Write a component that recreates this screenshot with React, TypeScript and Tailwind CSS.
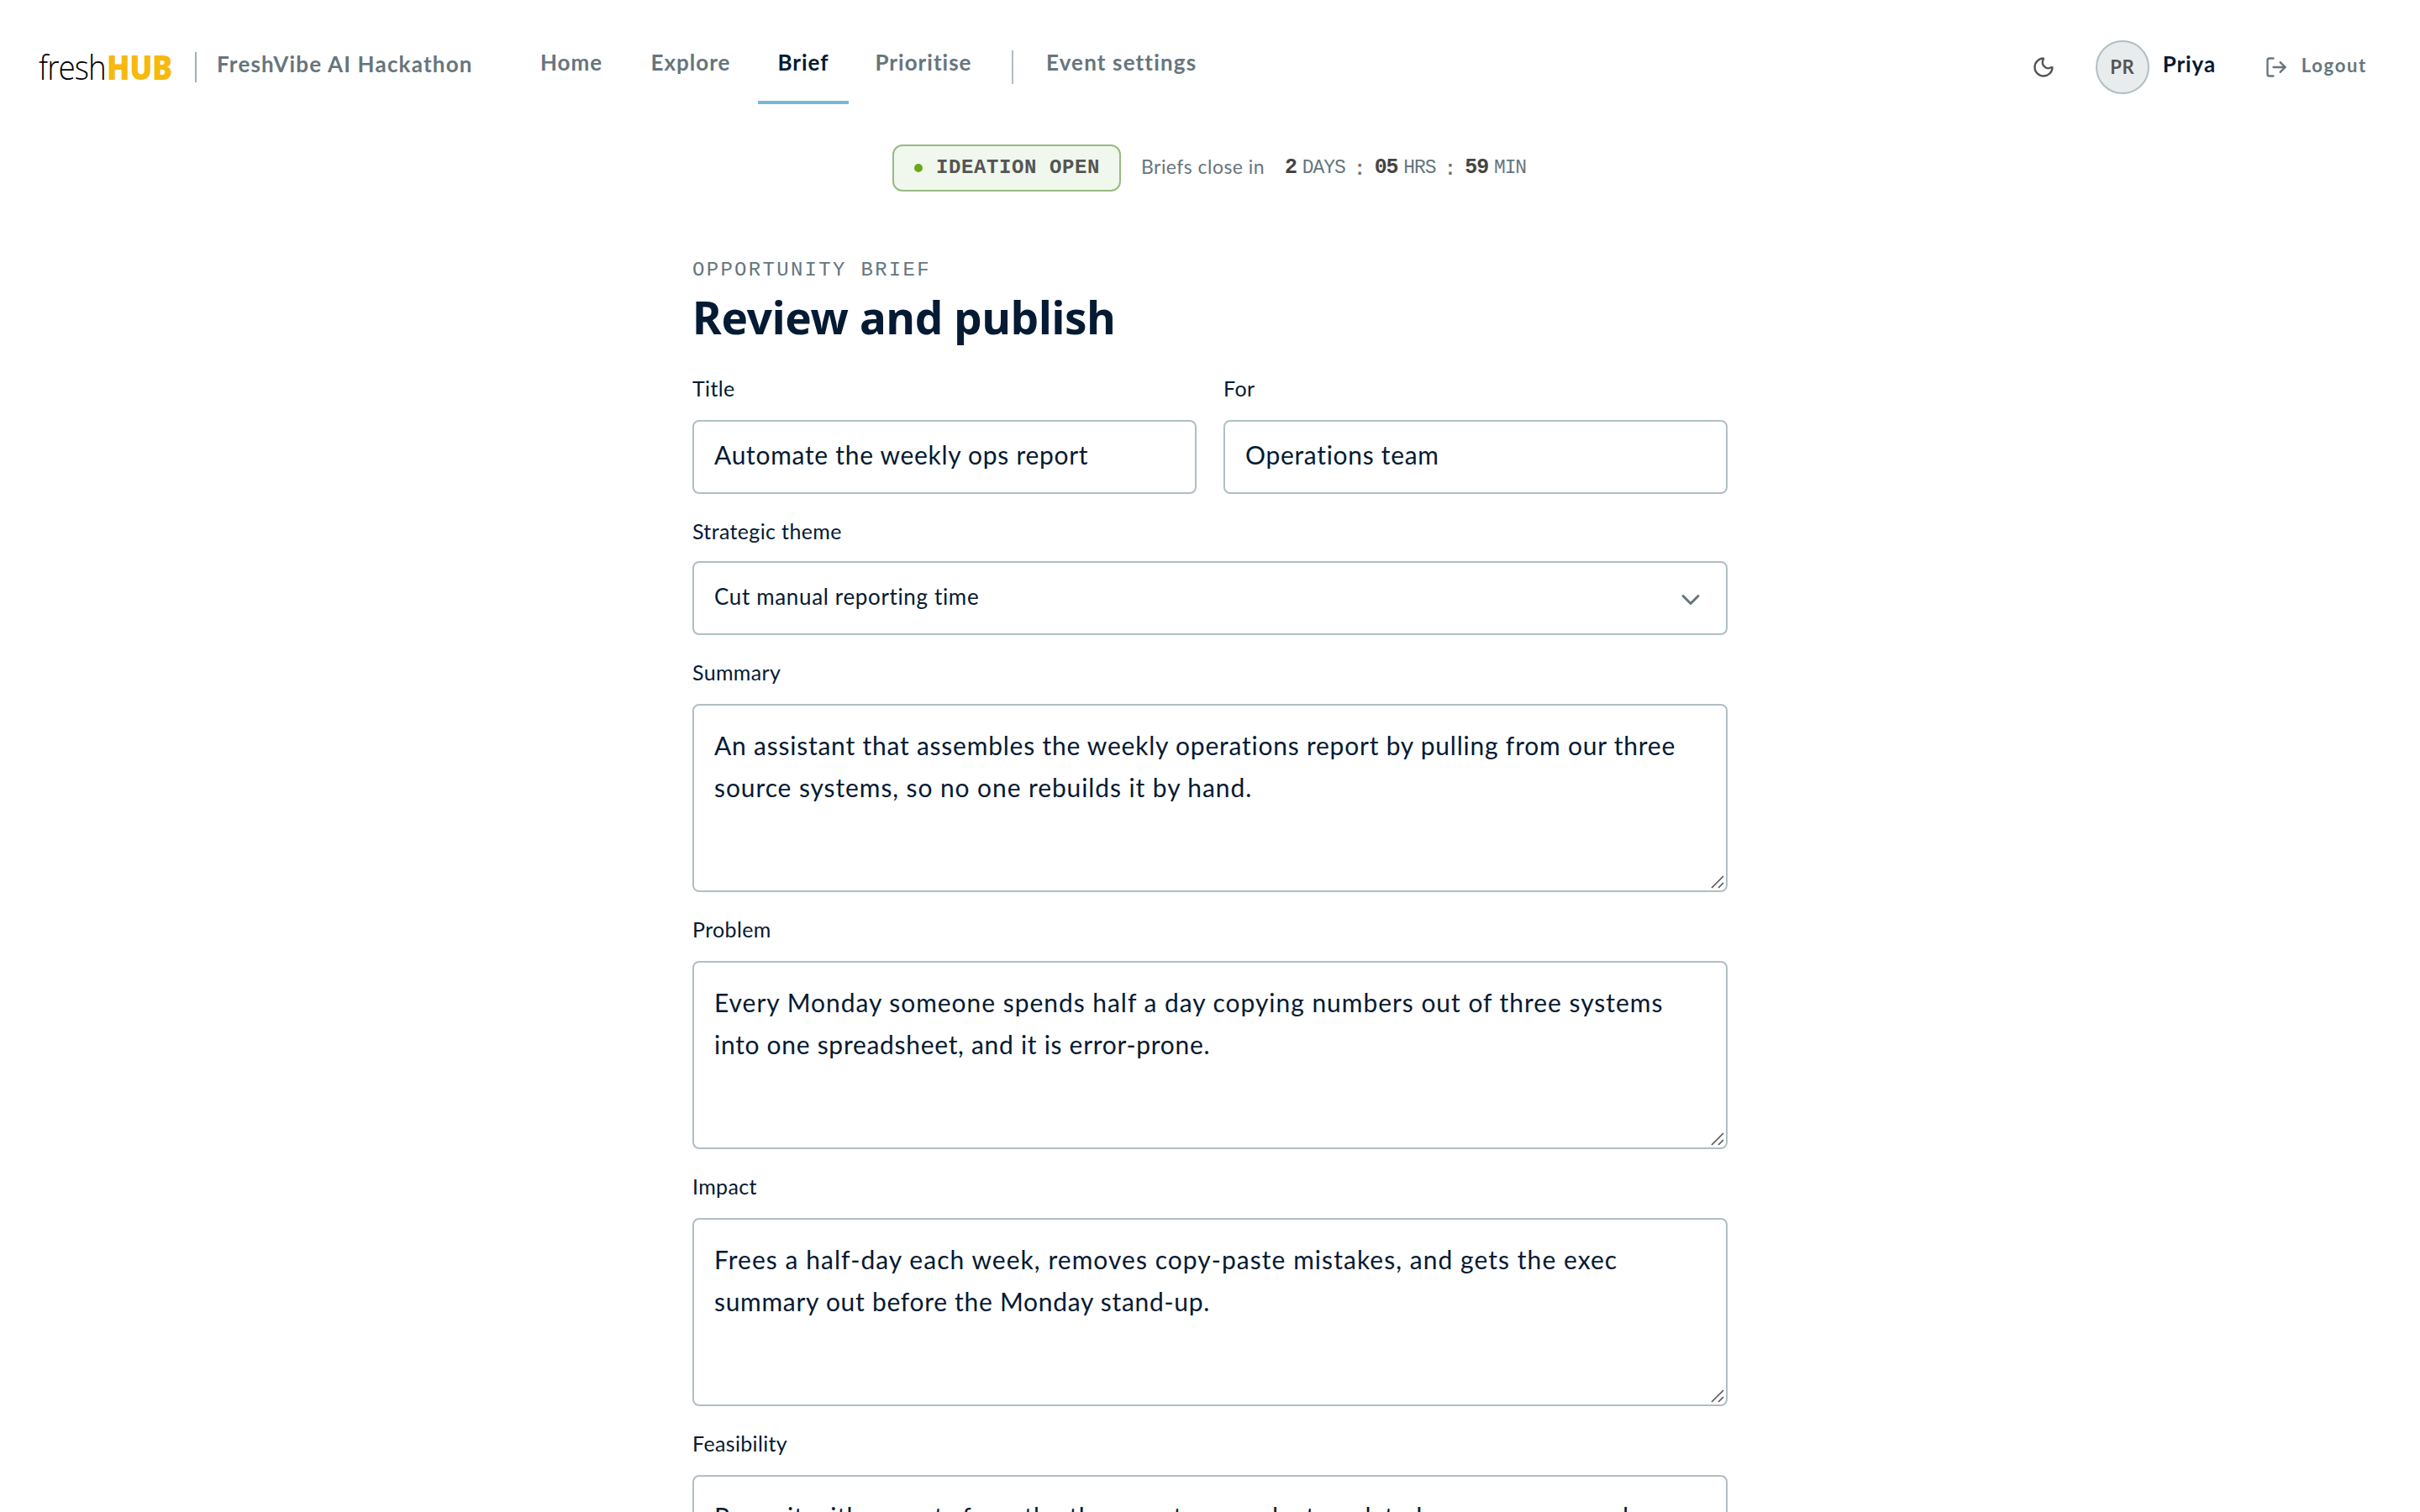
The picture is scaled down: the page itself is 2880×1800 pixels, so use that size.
import { ChevronDown, LogOut, Moon } from 'lucide-react';

interface NavItem {
  label: string;
  width: string;
  active?: boolean;
}

interface BriefField {
  label: string;
  lines: { text: string; tracking: string }[];
}

const NAV_ITEMS: NavItem[] = [
  { label: 'Home', width: 'w-[124px]' },
  { label: 'Explore', width: 'w-[144px]' },
  { label: 'Brief', width: 'w-[108px]', active: true },
  { label: 'Prioritise', width: 'w-[162px]' },
];

const FIELDS: BriefField[] = [
  {
    label: 'Summary',
    lines: [
      { text: 'An assistant that assembles the weekly operations report by pulling from our three', tracking: 'tracking-[0.77px]' },
      { text: 'source systems, so no one rebuilds it by hand.', tracking: 'tracking-[0.9px]' },
    ],
  },
  {
    label: 'Problem',
    lines: [
      { text: 'Every Monday someone spends half a day copying numbers out of three systems', tracking: 'tracking-[0.96px]' },
      { text: 'into one spreadsheet, and it is error-prone.', tracking: 'tracking-[0.7px]' },
    ],
  },
  {
    label: 'Impact',
    lines: [
      { text: 'Frees a half-day each week, removes copy-paste mistakes, and gets the exec', tracking: 'tracking-[1.04px]' },
      { text: 'summary out before the Monday stand-up.', tracking: 'tracking-[0.7px]' },
    ],
  },
  {
    label: 'Feasibility',
    lines: [
      { text: 'Prove it with exports from the three systems and a templated summary run and', tracking: 'tracking-[0.65px]' },
    ],
  },
];

export default function App() {
  return (
    <div className="h-[1800px] w-[2880px] overflow-hidden bg-white font-['Lato',sans-serif] text-[#051a33]">
      <Header />
      <PhaseBar />
      <main className="mx-auto w-[1232px] pt-[66px]">
        <p className="h-8 font-['Liberation_Mono',monospace] text-[24px] leading-8 tracking-[2.3px] text-[#66757d]">
          OPPORTUNITY BRIEF
        </p>
        <h1 className="mt-0.5 h-[76px] font-['Noto_Sans',sans-serif] text-[53px] leading-[76px] font-bold tracking-[-0.3px] whitespace-nowrap">
          Review and publish
        </h1>

        <div className="mt-7 grid grid-cols-2 gap-8">
          <TextField label="Title" value="Automate the weekly ops report" />
          <TextField label="For" value="Operations team" />
        </div>

        <div className="mt-[26px]">
          <FieldLabel>Strategic theme</FieldLabel>
          <div className="mt-[14px] flex h-[88px] items-center justify-between rounded-lg border-2 border-[#b0bec5] pr-[24px] pl-6">
            <span className="pb-[3px] text-[26px] tracking-[0.65px]">Cut manual reporting time</span>
            <ChevronDown size={36} strokeWidth={2} className="mt-[3px] text-[#66757d]" />
          </div>
        </div>

        {FIELDS.map(field => (
          <TextAreaField key={field.label} field={field} />
        ))}
      </main>
    </div>
  );
}

function Header() {
  return (
    <header className="flex h-[160px] items-center pr-[63px] pl-[46px]">
      <div className="flex h-[60px] w-[186px] items-center font-['Open_Sans',sans-serif] text-[40px] leading-[60px]">
        <span className="w-[81px] origin-left scale-x-[0.92] font-light tracking-[-1px] text-black">fresh</span>
        <span className="origin-left scale-x-90 font-extrabold tracking-[-0.5px] text-[#f7b90d]">HUB</span>
      </div>
      <div className="h-9 w-0.5 bg-[#9fb1bb]" />
      <div className="ml-6 w-[360px] pb-2 text-[26px] font-bold tracking-[1.2px] whitespace-nowrap text-[#66757d]">
        FreshVibe AI Hackathon
      </div>

      <nav className="flex items-center">
        <div className="flex gap-2">
          {NAV_ITEMS.map(item => (
            <a
              key={item.label}
              className={`flex h-[88px] items-center justify-center border-b-4 pb-2 text-[26px] font-bold tracking-[1px] ${item.width} ${
                item.active ? 'border-[#74b8da] text-[#051a33]' : 'border-transparent text-[#66757d]'
              }`}
            >
              {item.label}
            </a>
          ))}
        </div>
        <div className="ml-6 h-10 w-0.5 bg-[#b0bec5]" />
        <a className="ml-[39px] pb-3 text-[26px] font-bold tracking-[1.15px] text-[#66757d]">Event settings</a>
      </nav>

      <div className="ml-auto flex items-center">
        <Moon size={28} strokeWidth={2} className="text-[#555555]" />
        <div className="ml-12 flex size-16 items-center justify-center rounded-full border-2 border-[#b0bec5] bg-[#e8ecec] pb-0.5 text-[22px] font-bold tracking-[0.5px] text-[#555555]">
          PR
        </div>
        <span className="ml-4 w-[68px] pb-2 text-[26px] font-bold tracking-[0.9px]">Priya</span>
        <LogOut size={28} strokeWidth={2} className="ml-[53px] text-[#66757d]" />
        <span className="ml-4 pb-[6px] text-[22px] font-bold tracking-[1.7px] text-[#66757d]">Logout</span>
      </div>
    </header>
  );
}

function PhaseBar() {
  return (
    <div className="flex h-[80px] items-center pl-[1062px] text-[#66757d]">
      <div className="flex h-14 w-[272px] items-center rounded-xl border-2 border-[#97bb80] bg-[#f0f7ec] pl-6">
        <span className="size-2.5 rounded-full bg-[#6aa81a]" />
        <span className="ml-4 font-['Liberation_Mono',monospace] text-[24px] font-bold tracking-[0.6px] whitespace-nowrap text-[#555555]">
          IDEATION OPEN
        </span>
      </div>
      <span className="ml-6 w-[171px] pb-1 text-[23px] tracking-[0.45px] whitespace-nowrap">Briefs close in</span>
      <div className="flex items-center gap-2 font-['Liberation_Mono',monospace] whitespace-nowrap">
        <Unit value="2" unit="DAYS" />
        <Colon />
        <Unit value="05" unit="HRS" />
        <Colon />
        <Unit value="59" unit="MIN" />
      </div>
    </div>
  );
}

function Unit({ value, unit }: { value: string; unit: string }) {
  return (
    <div className="flex items-baseline gap-[7px]">
      <span className="text-[25px] font-bold tracking-[-1.2px] text-[#444444]">{value}</span>
      <span className="text-[23px] tracking-[-1.1px]">{unit}</span>
    </div>
  );
}

function Colon() {
  return <span className="w-[19px] pt-1 text-center text-[23px] font-bold">:</span>;
}

function FieldLabel({ children }: { children: string }) {
  return <div className="h-10 text-[25px] leading-[37px] tracking-[0.35px]">{children}</div>;
}

function TextField({ label, value }: { label: string; value: string }) {
  return (
    <div>
      <FieldLabel>{label}</FieldLabel>
      <div className="mt-4 flex h-[88px] items-center rounded-lg border-2 border-[#b0bec5] pb-[6px] pl-6 text-[30px] tracking-[0.7px] whitespace-nowrap">
        {value}
      </div>
    </div>
  );
}

function TextAreaField({ field }: { field: BriefField }) {
  return (
    <div className="mt-[26px]">
      <FieldLabel>{field.label}</FieldLabel>
      <div className="relative mt-4 h-[224px] rounded-lg border-2 border-[#b0bec5] pt-[22px] pl-6">
        {field.lines.map(line => (
          <p key={line.text} className={`h-[50px] text-[30px] leading-[50px] whitespace-nowrap ${line.tracking}`}>
            {line.text}
          </p>
        ))}
        <ResizeHandle />
      </div>
    </div>
  );
}

function ResizeHandle() {
  return (
    <svg className="absolute right-0.5 bottom-0.5 size-4" viewBox="0 0 16 16" fill="none" stroke="#555555" strokeWidth={1.6}>
      <path d="M1 15 15 1M9 15l6-6" />
    </svg>
  );
}
